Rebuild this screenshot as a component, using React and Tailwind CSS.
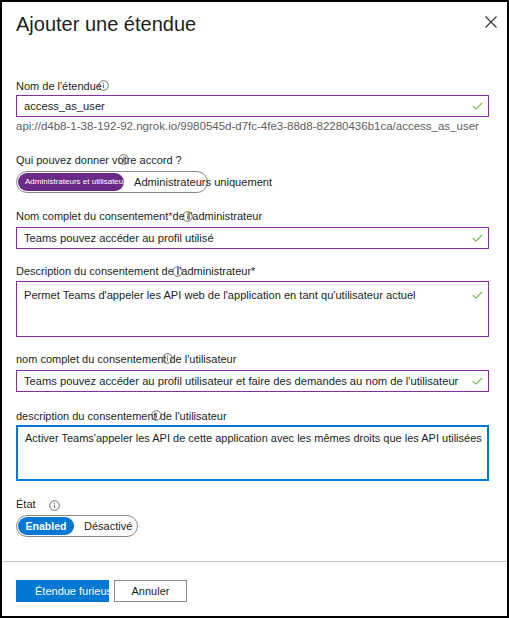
import React from 'react'

const FONT = { fontFamily: '"Liberation Sans", Arial, sans-serif' }

function Info({ left, top = 1 }) {
  return (
    <svg
      width="11" height="11" viewBox="0 0 11 11"
      className="absolute"
      style={{ left, top }}
    >
      <circle cx="5.5" cy="5.5" r="4.8" fill="none" stroke="#605e5c" strokeWidth="0.9" />
      <circle cx="5.5" cy="3.2" r="0.6" fill="#605e5c" />
      <path d="M5.5 4.7v3.4" stroke="#605e5c" strokeWidth="0.9" />
    </svg>
  )
}

function Check() {
  return (
    <svg width="11" height="8" viewBox="0 0 11 8" className="shrink-0">
      <path d="M0.8 4.2 3.8 7.1 10.2 0.8" fill="none" stroke="#6bb13a" strokeWidth="1.1" />
    </svg>
  )
}

function Label({ children, info, top = 2, className = '' }) {
  return (
    <div className={`relative h-4 leading-4 text-[11px] text-[#201f1e] whitespace-nowrap ${className}`}>
      {children}
      {info != null && <Info left={info} top={top} />}
    </div>
  )
}

function Field({ value, className = '' }) {
  return (
    <div className={`h-[22px] border border-[#8a2da5] flex items-center justify-between pl-[7px] pr-[5px] text-[11.2px] text-[#201f1e] ${className}`}>
      <span className="whitespace-nowrap min-w-0">{value}</span>
      <Check />
    </div>
  )
}

export default function App() {
  return (
    <div style={FONT} className="w-[509px] h-[618px] bg-white border-2 border-black flex flex-col overflow-hidden">
      <div className="flex items-start justify-between pl-[14px] pr-[10px] pt-[8px]">
        <h1 className="text-[20px] leading-7 text-[#201f1e] font-normal">Ajouter une étendue</h1>
        <svg width="12" height="12" viewBox="0 0 12 12" className="mt-[6px]">
          <path d="M0.5 0.5 11.5 11.5M11.5 0.5 0.5 11.5" stroke="#323130" strokeWidth="1.1" />
        </svg>
      </div>

      <div className="pl-[14px] pr-[18px] flex flex-col">
        <Label info={82} top={1.5} className="mt-[40px]">Nom de l'étendue</Label>
        <Field value="access_as_user" className="mt-px" />
        <div className="mt-px h-4 leading-4 text-[11.5px] text-[#605e5c] whitespace-nowrap">
          api://d4b8-1-38-192-92.ngrok.io/9980545d-d7fc-4fe3-88d8-82280436b1ca/access_as_user
        </div>

        <Label info={102} top={1.5} className="mt-[18px]">Qui pouvez donner votre accord ?</Label>
        <div className="mt-[3px] w-[192px] h-[22px] rounded-full border border-[#8a8886] flex items-center px-px">
          <div className="shrink-0 w-[106px] h-[18px] rounded-full bg-[#6b2a87] text-white text-[8px] leading-[18px] pl-[7px] overflow-hidden whitespace-nowrap">
            Administrateurs et utilisateurs
          </div>
          <span className="shrink-0 ml-[10px] text-[11.1px] text-[#201f1e] whitespace-nowrap">Administrateurs uniquement</span>
        </div>

        <Label info={166} top={2.5} className="mt-[15px]">
          Nom complet du consentement<span className="text-[#a4262c]">*</span>de l'administrateur
        </Label>
        <Field value="Teams pouvez accéder au profil utilisé" className="mt-[3px]" />

        <Label info={156} top={2.5} className="mt-[14px]">Description du consentement de l'administrateur*</Label>
        <div className="mt-[2px] h-[56px] border border-[#8a2da5] flex items-start justify-between pl-[7px] pr-[5px] pt-[5px] text-[11.1px] text-[#201f1e]">
          <span className="whitespace-nowrap">Permet Teams d'appeler les API web de l'application en tant qu'utilisateur actuel</span>
          <div className="mt-[4px]"><Check /></div>
        </div>

        <Label info={146} top={1.5} className="mt-[14px]">nom complet du consentement de l'utilisateur</Label>
        <Field value="Teams pouvez accéder au profil utilisateur et faire des demandes au nom de l'utilisateur" className="mt-[3px]" />

        <Label info={135} top={1.5} className="mt-[16px]">description du consentement de l'utilisateur</Label>
        <div className="mt-px h-[56px] border-2 border-[#0078d4] pl-[7px] pt-[3px] text-[11px] text-[#201f1e] whitespace-nowrap overflow-hidden">
          Activer Teams'appeler les API de cette application avec les mêmes droits que les API utilisées
        </div>

        <Label info={33} top={3.5} className="mt-[15px]">État</Label>
        <div className="mt-[3px] w-[122px] h-[22px] rounded-full border border-[#8a8886] flex items-center px-px">
          <div className="shrink-0 w-[56px] h-[18px] rounded-full bg-[#0078d4] text-white text-[10.5px] font-bold leading-[18px] text-center">
            Enabled
          </div>
          <span className="shrink-0 ml-[10px] text-[11px] text-[#201f1e] whitespace-nowrap">Désactivé</span>
        </div>
      </div>

      <div className="mt-[24px] h-px bg-[#c8c6c4]" />

      <div className="mt-[18px] pl-[14px] flex items-center gap-[5px]">
        <div className="shrink-0 w-[93px] h-[22px] bg-[#0078d4] text-white text-[11px] leading-[22px] pl-[19px] overflow-hidden whitespace-nowrap">
          Étendue furieuse
        </div>
        <div className="shrink-0 w-[73px] h-[22px] border border-[#8a8886] text-[11px] text-[#201f1e] leading-[20px] text-center">
          Annuler
        </div>
      </div>
    </div>
  )
}
